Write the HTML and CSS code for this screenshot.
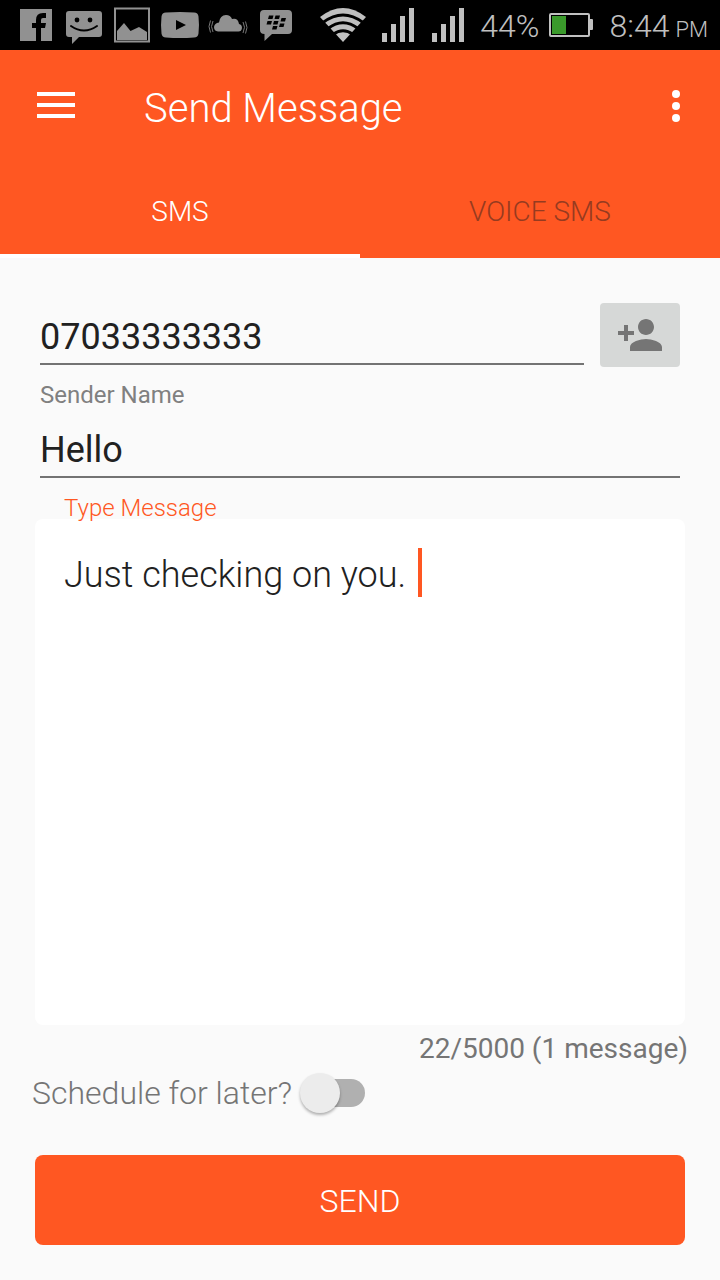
FILE: index.html
```
<!DOCTYPE html>
<html lang="en">
<head>
<meta charset="utf-8">
<meta name="viewport" content="width=device-width, initial-scale=1">
<title>Send Message</title>
<link rel="stylesheet" href="styles.css">
</head>
<body class="screen">
<div class="status">
  <div class="status-apps">
    <svg class="app-icon" viewBox="0 0 36 40" aria-hidden="true"><path d="M2 4h32v32H2z"/><path class="cut" d="M18 36V23h-4v-5h4v-3q0-7 7-7h3v5h-3q-2 0-2 2v3h5l-1 5h-4v13z"/></svg>
    <svg class="app-icon" viewBox="0 0 36 40" aria-hidden="true"><path d="M3 6h30q3 0 3 3v20q0 3-3 3H13l-7 7v-7H3q-3 0-3-3V9q0-3 3-3z"/><circle class="cut" cx="11" cy="15" r="2.400"/><circle class="cut" cx="24" cy="15" r="2.400"/><path class="cut-line" d="M5 21q13 9 26 0"/></svg>
    <svg class="app-icon" viewBox="0 0 36 40" aria-hidden="true"><path class="app-line" d="M1 3.500h34v33H1z"/><path d="M3 35v-9l7-8 6.500 8 8.500-4 8 5v8z"/></svg>
    <svg class="app-icon" viewBox="0 0 36 40" aria-hidden="true"><path d="M4 7.500q14-1 28 0 4 0 4.500 4 1 9 0 17-.5 4-4.500 4-14 1-28 0-4 0-4.500-4-1-8 0-17 .5-4 4.500-4z"/><path class="cut" d="M14 15l10 5-10 5z"/></svg>
    <svg class="app-icon" viewBox="0 0 36 40" aria-hidden="true"><path d="M8 26.500q-4-.5-4-4.500 .5-4 5-4.500 1-7.500 7-7.500 4.500 0 6 4 6-1.500 7 5 3 .5 3 4-.5 3.500-3.500 3.500z"/><path class="app-wave" d="M3 16q-3 5.500 0 11M.5 15.500q-3 6 0 12M33 17q3 5 0 11M35.500 16.500q3 6 0 12"/></svg>
    <svg class="app-icon" viewBox="0 0 36 40" aria-hidden="true"><path d="M6 5h24q4 0 4 4v16q0 4-4 4H14l-7.500 7v-7q-4.500 0-4.500-4V9q0-4 4-4z"/><path class="cut" d="M11 10.500h4.500l-1 3.500H10zM17.500 10.500H22L21 14h-4.500zM9.500 16H14l-1 3.500H8.500zM16 16h4.500l-1 3.500H15zM23.500 13H28l-1 3.500h-4.500zM22 18.500h4.500l-1 3.500H21zM15 21h4.500l-1 3.500H14z"/></svg>
  </div>
  <div class="status-system">
    <svg class="wifi" viewBox="0 0 46 34" aria-hidden="true"><path d="M0 9Q23-9 46 9L23 34z"/><path class="wifi-gap" d="M3 14.500q20-15 40 0M8 20.500q15-11.500 30 0M13 26.500q10-7.500 20 0"/></svg>
    <div class="signals">
      <svg class="signal" viewBox="0 0 32 36" aria-hidden="true"><path d="M0 26h5v9H0zM9 17h5v18H9zM18 9h5v26h-5zM27 1h5v34h-5z"/></svg>
      <svg class="signal" viewBox="0 0 32 36" aria-hidden="true"><path d="M0 26h5v9H0zM9 17h5v18H9zM18 9h5v26h-5zM27 1h5v34h-5z"/></svg>
    </div>
    <div class="power">
      <span class="reading">44%</span>
      <svg class="battery" viewBox="0 0 44 26" aria-hidden="true"><rect class="battery-case" x="1" y="2" width="39" height="22" rx="1"/><path class="battery-cap" d="M41 7h2q1 0 1 1v9q0 1-1 1h-2z"/><path class="battery-level" d="M3 4h14v18H3z"/></svg>
    </div>
    <div class="clock reading"><span>8:44</span><span class="clock-half">PM</span></div>
  </div>
</div>
<header class="header">
  <div class="toolbar">
    <button class="tool" type="button" aria-label="Menu"><svg class="menu-icon" viewBox="0 0 38 28" aria-hidden="true"><path d="M0 0h38v4H0zM0 11h38v4H0zM0 22h38v4H0z"/></svg></button>
    <h1 class="title">Send Message</h1>
    <button class="tool" type="button" aria-label="More options"><svg class="more-icon" viewBox="0 0 8 32" aria-hidden="true"><circle cx="4" cy="4" r="4"/><circle cx="4" cy="16" r="4"/><circle cx="4" cy="28" r="4"/></svg></button>
  </div>
  <div class="tabs" role="tablist">
    <button class="tab tab-active" type="button" role="tab" aria-selected="true">SMS</button>
    <button class="tab" type="button" role="tab" aria-selected="false">VOICE SMS</button>
  </div>
</header>
<main class="main">
  <form class="form">
    <div class="fields">
      <div class="recipient">
        <input class="field" type="tel" aria-label="Recipient" value="07033333333">
        <button class="add-contact" type="button" aria-label="Add contact"><svg class="add-icon" viewBox="1 4 22 16" aria-hidden="true"><path d="M15 12c2.210 0 4-1.790 4-4s-1.790-4-4-4-4 1.790-4 4 1.790 4 4 4zm-9-2V7H4v3H1v2h3v3h2v-3h3v-2H6zm9 4c-2.670 0-8 1.340-8 4v2h16v-2c0-2.660-5.330-4-8-4z"/></svg></button>
      </div>
      <label class="label" for="sender">Sender Name</label>
      <input class="field" id="sender" type="text" value="Hello">
    </div>
    <label class="label message-label" for="message">Type Message</label>
    <div class="message-box">
      <textarea class="message" id="message">Just checking on you. </textarea>
      <span class="caret"></span>
    </div>
    <p class="counter">22/5000 (1 message)</p>
    <div class="schedule">
      <label for="later">Schedule for later?</label>
      <input class="switch" id="later" type="checkbox" role="switch">
    </div>
    <button class="send" type="button">SEND</button>
  </form>
</main>
</body>
</html>
```

FILE: styles.css
```
* { box-sizing: border-box; }
.screen {
  margin: 0;
  min-height: 100vh;
  display: flex;
  flex-direction: column;
  background: #fafafa;
  color: #212121;
  font-family: Roboto, "Noto Sans", sans-serif;
  font-weight: 300;
}
button, input, textarea {
  font: inherit;
  color: inherit;
  border: 0;
  border-radius: 0;
  margin: 0;
  padding: 0;
  background: none;
  outline: 0;
}
svg { display: block; overflow: visible; flex: none; }

.status {
  display: flex;
  justify-content: space-between;
  align-items: center;
  height: 50px;
  padding: 0 12px 0 18px;
  background: #000;
  color: #c0c0c0;
  font-size: 32px;
  line-height: 40px;
}
.status-apps { display: flex; gap: 12px; }
.app-icon { width: 36px; height: 40px; fill: #919191; }
.app-line { fill: none; stroke: #919191; stroke-width: 2; }
.app-wave { fill: none; stroke: #777; stroke-width: 1; }
.cut { fill: #000; }
.cut-line { fill: none; stroke: #000; stroke-width: 2; stroke-linecap: round; }
.status-system { display: flex; align-items: center; gap: 16px; }
.reading { padding-top: 2px; }
.wifi { width: 46px; height: 34px; fill: #c0c0c0; }
.wifi-gap { fill: none; stroke: #000; stroke-width: 3; }
.signals { display: flex; gap: 18px; }
.signal { width: 32px; height: 36px; fill: #c0c0c0; }
.power { display: flex; align-items: center; gap: 10px; }
.battery { width: 44px; height: 26px; }
.battery-case { fill: none; stroke: #c0c0c0; stroke-width: 2; }
.battery-cap { fill: #c0c0c0; }
.battery-level { fill: #3a9a2b; }
.clock { display: flex; align-items: baseline; gap: 6px; }
.clock-half { font-size: 22px; line-height: 22px; }

.header { background: #ff5722; color: #fff; }
.toolbar {
  display: flex;
  align-items: center;
  height: 112px;
  padding: 0 16px 0 28px;
}
.tool {
  display: grid;
  place-items: center;
  width: 56px;
  height: 56px;
  fill: #fff;
}
.menu-icon { width: 38px; height: 28px; }
.more-icon { width: 8px; height: 32px; }
.title {
  flex: 1;
  margin: 0;
  padding: 6px 0 0 60px;
  font-size: 40px;
  line-height: 48px;
  font-weight: 300;
}
.tabs { display: grid; grid-template-columns: 1fr 1fr; }
.tab {
  height: 96px;
  padding-top: 6px;
  border-bottom: 4px solid transparent;
  font-size: 28px;
  color: #963b20;
}
.tab-active { color: #fff; border-bottom-color: #fff; }

.main { flex: 1; display: flex; padding: 45px 35px 35px; }
.form { flex: 1; display: flex; flex-direction: column; min-width: 0; }
.fields { display: flex; flex-direction: column; padding: 0 5px; }
.recipient { display: flex; align-items: center; gap: 16px; }
.field {
  flex: 1;
  min-width: 0;
  height: 60px;
  padding-top: 6px;
  border-bottom: 2px solid #737373;
  font-size: 36px;
  font-weight: 400;
}
.fields > .field { flex: none; }
.add-contact {
  display: grid;
  place-items: center;
  width: 80px;
  height: 64px;
  border-radius: 4px;
  background: #d6d8d7;
  fill: #757575;
}
.add-icon { width: 44px; height: 32px; }
.label {
  padding-top: 14px;
  font-size: 24px;
  line-height: 28px;
  font-weight: 400;
  color: #808080;
}
.fields .label { padding-bottom: 9px; }
.message-label {
  padding-top: 16px;
  padding-left: 29px;
  margin-bottom: -3px;
  position: relative;
  z-index: 1;
  font-weight: 300;
  color: #ff5722;
}
.message-box {
  flex: 1;
  display: flex;
  position: relative;
  min-height: 200px;
  border-radius: 8px;
  background: #fff;
}
.message {
  flex: 1;
  min-width: 0;
  padding: 35px 29px;
  resize: none;
  font-size: 36px;
  line-height: 42px;
  caret-color: transparent;
}
.caret {
  position: absolute;
  top: 29px;
  left: 383px;
  width: 4px;
  height: 49px;
  background: #ff5722;
}
.counter {
  margin: 7px -3px 0;
  text-align: right;
  font-size: 28px;
  line-height: 34px;
  font-weight: 400;
  color: #757575;
}
.schedule {
  display: flex;
  align-items: center;
  gap: 8px;
  margin-left: -3px;
  padding: 6px 0 41px;
  font-size: 32px;
  line-height: 42px;
  color: #757575;
}
.switch {
  appearance: none;
  display: grid;
  align-items: center;
  justify-items: start;
  width: 65px;
  height: 40px;
}
.switch::before, .switch::after { content: ""; grid-area: 1 / 1; }
.switch::before {
  justify-self: end;
  width: 50px;
  height: 28px;
  border-radius: 14px;
  background: #b0b0b0;
}
.switch::after {
  width: 40px;
  height: 40px;
  border-radius: 50%;
  background: #ececec;
  box-shadow: 0 2px 3px rgba(0, 0, 0, .3);
}
.switch:checked::before { justify-self: start; }
.switch:checked::after { justify-self: end; }
.send {
  height: 90px;
  padding-top: 2px;
  border-radius: 8px;
  background: #ff5722;
  color: #fff;
  font-size: 32px;
}
```
